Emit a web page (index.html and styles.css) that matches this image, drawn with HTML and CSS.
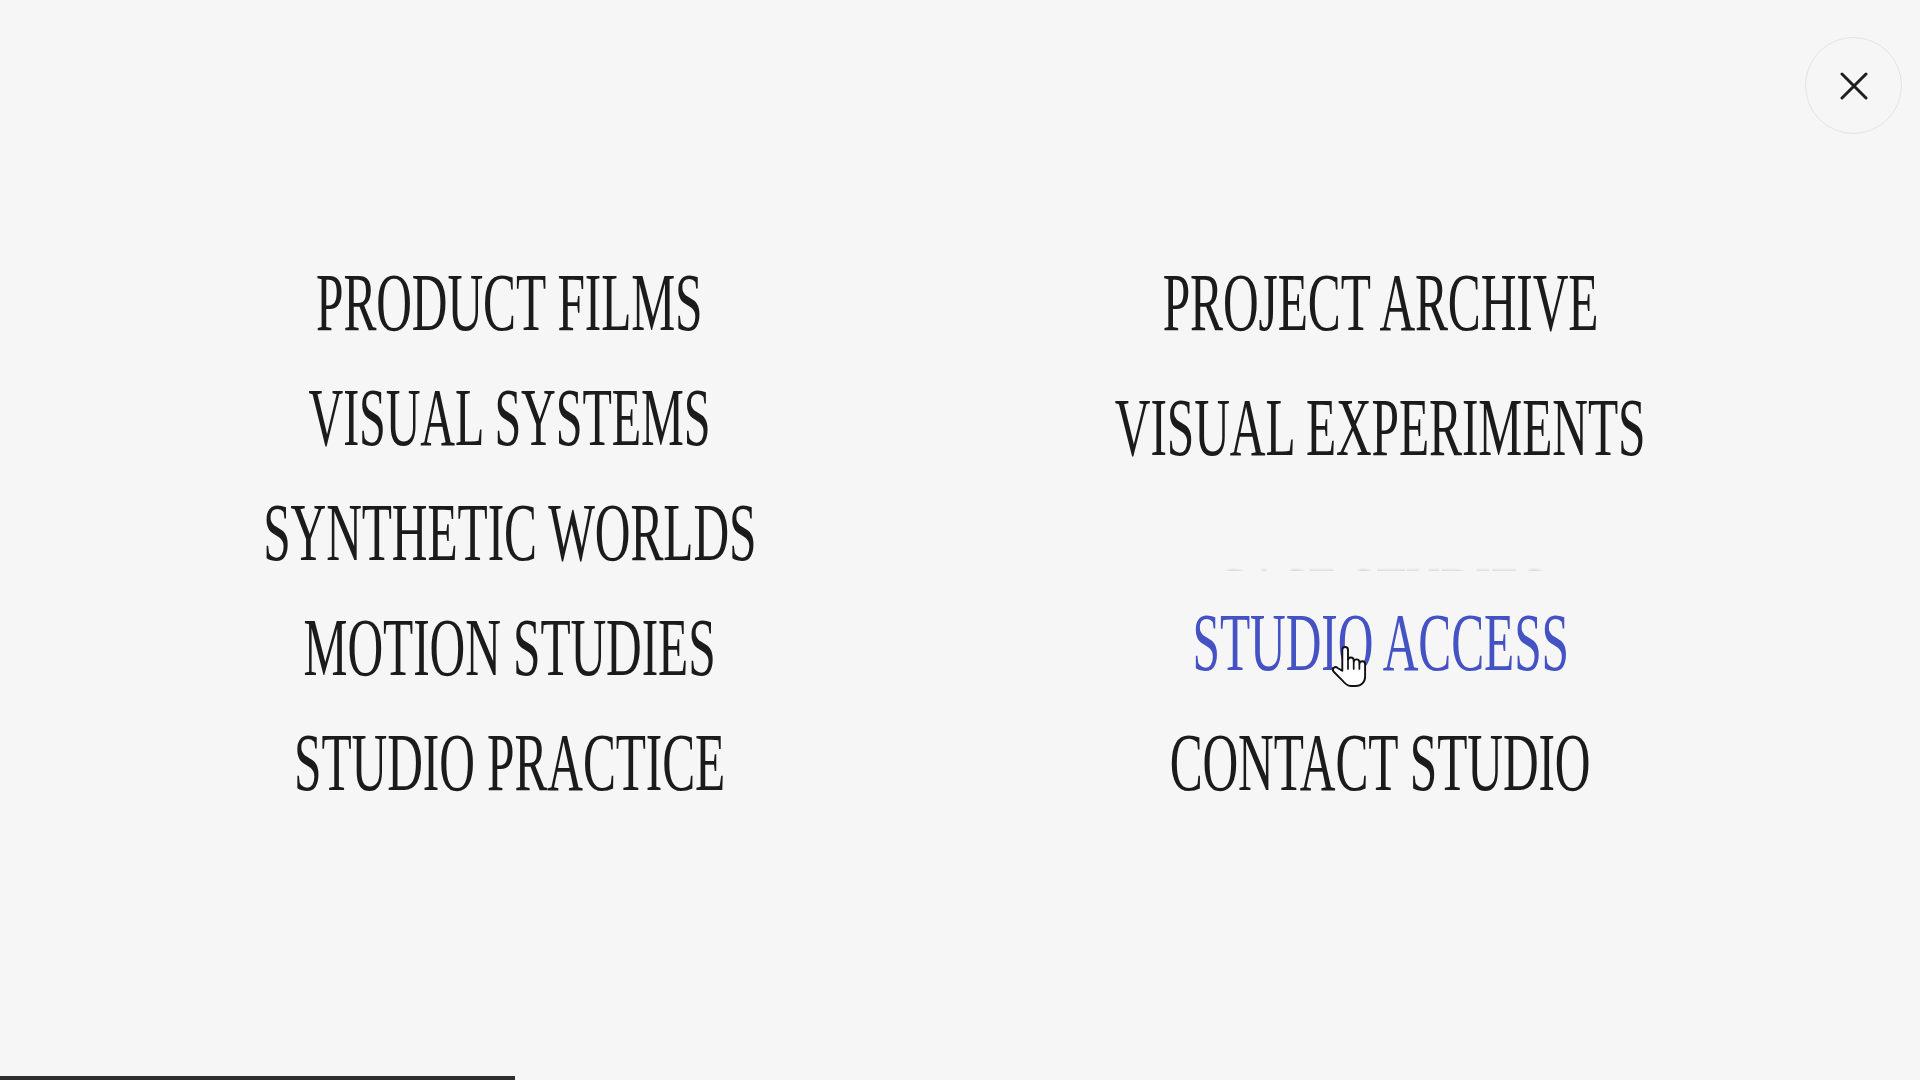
FILE: index.html
```html
<!DOCTYPE html>
<html lang="en">
<head>
<meta charset="utf-8">
<title>Menu</title>
<link rel="stylesheet" href="styles.css">
</head>
<body>
<div class="overlay">
  <header class="topbar">
    <button class="close-btn" aria-label="Close menu">
      <svg width="28" height="28" viewBox="0 0 28 28" aria-hidden="true">
        <path d="M2 2 L26 26 M26 2 L2 26" stroke="#1e1e1e" stroke-width="3" stroke-linecap="round" fill="none"/>
      </svg>
    </button>
  </header>

  <nav class="menu">
    <ul class="menu-col">
      <li class="menu-row"><a class="menu-link" href="#">PRODUCT FILMS</a></li>
      <li class="menu-row"><a class="menu-link menu-link--narrow" href="#">VISUAL SYSTEMS</a></li>
      <li class="menu-row"><a class="menu-link" href="#">SYNTHETIC WORLDS</a></li>
      <li class="menu-row"><a class="menu-link" href="#">MOTION STUDIES</a></li>
      <li class="menu-row"><a class="menu-link" href="#">STUDIO PRACTICE</a></li>
    </ul>
    <ul class="menu-col">
      <li class="menu-row"><a class="menu-link" href="#">PROJECT ARCHIVE</a></li>
      <li class="menu-row"><a class="menu-link menu-link--lagging" href="#">VISUAL EXPERIMENTS</a></li>
      <li class="menu-row menu-row--reveal"><span class="reveal-mask"><a class="menu-link menu-link--hidden" href="#">CASE STUDIES</a></span></li>
      <li class="menu-row"><a class="menu-link menu-link--active" href="#">STUDIO ACCESS</a></li>
      <li class="menu-row"><a class="menu-link" href="#">CONTACT STUDIO</a></li>
    </ul>
  </nav>

  <div class="progress"><div class="progress-fill" style="width: 26.8%"></div></div>

  <svg class="cursor" width="38" height="48" viewBox="0 0 20 24" aria-hidden="true">
    <path d="M7 14 V3 a1.5 1.5 0 0 1 3 0 V8.5 a1.5 1.5 0 0 1 3 0 V9.5 a1.5 1.5 0 0 1 3 0 V10.5 a1.5 1.5 0 0 1 3 0 V17 c0 3 -2 5 -5 5 H11.5 c-2 0 -3 -1 -4.5 -3 L2.5 14.5 a1.4 1.4 0 0 1 2 -2 L7 14 Z" fill="#ffffff" stroke="#111111" stroke-width="1" stroke-linejoin="round"/>
    <path d="M10 9 V13 M13 10 V13 M16 11 V13" stroke="#111111" stroke-width="0.9" stroke-linecap="round"/>
  </svg>
</div>
</body>
</html>
```

FILE: styles.css
```css
* {
  box-sizing: border-box;
}

html,
body {
  margin: 0;
  padding: 0;
  background: #f6f6f6;
}

body {
  font-family: "Liberation Serif", "Times New Roman", serif;
  color: #1b1b1b;
  overflow: hidden;
}

.overlay {
  position: relative;
  width: 1920px;
  height: 1080px;
  display: flex;
  flex-direction: column;
}

.topbar {
  display: flex;
  justify-content: flex-end;
  padding: 37px 18px 0 0;
}

.close-btn {
  width: 97px;
  height: 97px;
  border-radius: 50%;
  border: 1.5px solid #e3e3e3;
  background: transparent;
  display: flex;
  align-items: center;
  justify-content: center;
  padding: 0;
  cursor: pointer;
}

.menu {
  display: grid;
  grid-template-columns: 871px 871px;
  padding-left: 74px;
  margin-top: 111px;
}

.menu-col {
  list-style: none;
  margin: 0;
  padding: 0;
  display: flex;
  flex-direction: column;
  align-items: center;
}

.menu-row {
  height: 115px;
  line-height: 115px;
  font-size: 83px;
  white-space: nowrap;
  display: flex;
  justify-content: center;
}

.menu-link {
  display: inline-block;
  color: #1b1b1b;
  text-decoration: none;
  transform: scaleX(0.596);
  transform-origin: center;
  letter-spacing: -0.2px;
}

.menu-link--narrow {
  transform: scaleX(0.58);
}

.menu-link--lagging {
  transform: translateY(10px) scaleX(0.596);
}

.menu-link--active {
  color: #4552c3;
  transform: translateY(-5px) scaleX(0.596);
}

.reveal-mask {
  display: block;
  height: 96px;
  overflow: hidden;
}

.menu-link--hidden {
  color: #d2d2d2;
  transform: translateY(64px) scaleX(0.58);
  filter: blur(0.9px);
}

.progress {
  margin-top: auto;
  height: 4px;
  width: 100%;
}

.progress-fill {
  height: 100%;
  background: #2e2e2e;
}

.cursor {
  position: absolute;
  left: 1329px;
  top: 643px;
}
```
